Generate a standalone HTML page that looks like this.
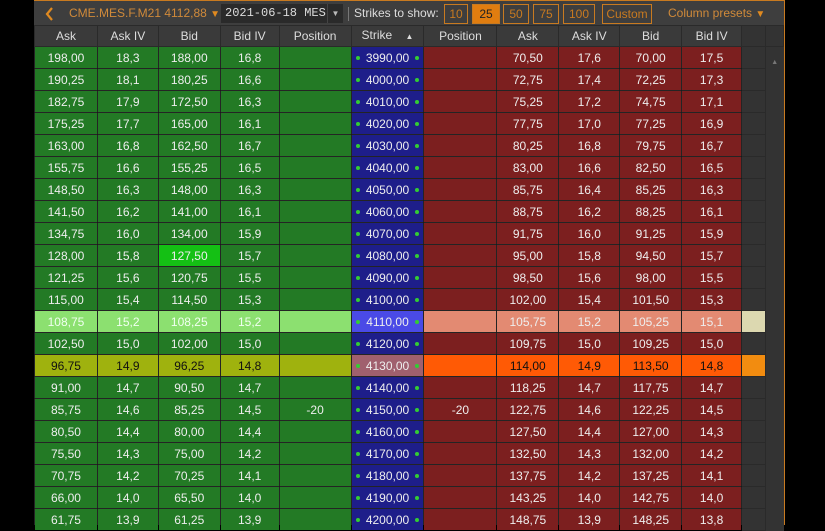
<!DOCTYPE html>
<html><head><style>
*{margin:0;padding:0;box-sizing:border-box}
body{width:825px;height:525px;background:#000;overflow:hidden;font-family:"Liberation Sans",sans-serif;font-size:12px;color:#eee;position:relative}
#win{position:absolute;left:34px;top:0;width:751px;height:525px;background:#333;border-right:1px solid #c87a20;border-top:1px solid #c87a20}
#bar{position:absolute;left:0;top:0;width:750px;height:25px;background:#3e3e3e}
.bar span{position:absolute;top:5px}
.btn{position:absolute;top:3px;height:20px;border:1px solid #c87a20;color:#c87a20;text-align:center;line-height:18px;font-size:12px}
table{position:absolute;left:0;top:24px;border-collapse:collapse;table-layout:fixed}
td,th{height:22px;text-align:center;border:1px solid rgba(0,0,0,.28);white-space:nowrap;overflow:hidden;font-weight:normal;line-height:20px;padding:0}
th{background:#3a3a3a;color:#ddd;height:20px;line-height:18px;border-color:#2a2a2a}
td.g{background:#237a25}
td.r{background:#7c1f1f}
td.s{background:#1e1e8a;position:relative}
td.s:before,td.s:after{content:"";position:absolute;top:9px;width:4px;height:4px;border-radius:2px;background:#3c3}
td.s:before{left:4px}td.s:after{right:4px}
td.e{background:#333;border-color:#2a2a2a}
td.sb{background:#333;border:none;border-left:1px solid #2a2a2a}
tr.hl td.g{background:#8ce070;color:#f0fff0}
tr.hl td.s{background:#4a4ae6}
tr.hl td.r{background:#e38a72}
tr.hl td.e{background:#dcd8b0}
tr.at td.g{background:#9fb20e;color:#111}
tr.at td.s{background:#a0606e}
tr.at td.r{background:#ff5a05;color:#111}
tr.at td.e{background:#f28c10}
</style></head><body>
<div id="win">
<div id="bar" class="bar">
<svg style="position:absolute;left:11px;top:6px" width="10" height="14" viewBox="0 0 10 14"><path d="M7 1 L2 7 L7 13" fill="none" stroke="#e08a20" stroke-width="2.2"/></svg>
<span style="left:35px;color:#d08a3a">CME.MES.F.M21 4112,88 <span style="position:static;color:#e08a20;font-size:10px">&#9660;</span></span>
<div style="position:absolute;left:187px;top:3px;width:106px;height:19px;background:#2a2a2a;font-family:'Liberation Mono',monospace;line-height:19px;padding-left:4px;color:#ddd">2021-06-18 MES</div>
<div style="position:absolute;left:293px;top:3px;width:16px;height:19px;background:#2a2a2a;border-left:1px solid #444;color:#bbb;font-size:8px;text-align:center;line-height:19px">&#9660;</div>
<div style="position:absolute;left:314px;top:6px;width:1px;height:14px;background:#777"></div>
<span style="left:320px;color:#ddd">Strikes to show:</span>
<div class="btn" style="left:410px;width:24px">10</div>
<div class="btn" style="left:438px;width:28px;background:#e07d10;color:#222">25</div>
<div class="btn" style="left:469px;width:26px">50</div>
<div class="btn" style="left:499px;width:26px">75</div>
<div class="btn" style="left:529px;width:32px">100</div>
<div class="btn" style="left:568px;width:50px">Custom</div>
<span style="left:634px;color:#d08a3a">Column presets <span style="position:static;color:#e08a20;font-size:10px">&#9660;</span></span>
</div>
<table>
<colgroup><col style="width:63px"><col style="width:61px"><col style="width:62px"><col style="width:59px"><col style="width:72px"><col style="width:73px"><col style="width:73px"><col style="width:62px"><col style="width:61px"><col style="width:62px"><col style="width:60px"><col style="width:24px"><col style="width:18px"></colgroup>
<tr><th>Ask</th><th>Ask IV</th><th>Bid</th><th>Bid IV</th><th>Position</th><th>Strike <span style="font-size:8px;margin-left:10px">&#9650;</span></th><th>Position</th><th>Ask</th><th>Ask IV</th><th>Bid</th><th>Bid IV</th><th style="background:#333"></th><th style="background:#333"></th></tr>
<tr><td class="g">198,00</td><td class="g">18,3</td><td class="g">188,00</td><td class="g">16,8</td><td class="g"></td><td class="s">3990,00</td><td class="r"></td><td class="r">70,50</td><td class="r">17,6</td><td class="r">70,00</td><td class="r">17,5</td><td class="e"></td><td class="sb" rowspan="22" style="vertical-align:top;color:#777;font-size:7px;padding-top:6px">&#9650;</td></tr>
<tr><td class="g">190,25</td><td class="g">18,1</td><td class="g">180,25</td><td class="g">16,6</td><td class="g"></td><td class="s">4000,00</td><td class="r"></td><td class="r">72,75</td><td class="r">17,4</td><td class="r">72,25</td><td class="r">17,3</td><td class="e"></td></tr>
<tr><td class="g">182,75</td><td class="g">17,9</td><td class="g">172,50</td><td class="g">16,3</td><td class="g"></td><td class="s">4010,00</td><td class="r"></td><td class="r">75,25</td><td class="r">17,2</td><td class="r">74,75</td><td class="r">17,1</td><td class="e"></td></tr>
<tr><td class="g">175,25</td><td class="g">17,7</td><td class="g">165,00</td><td class="g">16,1</td><td class="g"></td><td class="s">4020,00</td><td class="r"></td><td class="r">77,75</td><td class="r">17,0</td><td class="r">77,25</td><td class="r">16,9</td><td class="e"></td></tr>
<tr><td class="g">163,00</td><td class="g">16,8</td><td class="g">162,50</td><td class="g">16,7</td><td class="g"></td><td class="s">4030,00</td><td class="r"></td><td class="r">80,25</td><td class="r">16,8</td><td class="r">79,75</td><td class="r">16,7</td><td class="e"></td></tr>
<tr><td class="g">155,75</td><td class="g">16,6</td><td class="g">155,25</td><td class="g">16,5</td><td class="g"></td><td class="s">4040,00</td><td class="r"></td><td class="r">83,00</td><td class="r">16,6</td><td class="r">82,50</td><td class="r">16,5</td><td class="e"></td></tr>
<tr><td class="g">148,50</td><td class="g">16,3</td><td class="g">148,00</td><td class="g">16,3</td><td class="g"></td><td class="s">4050,00</td><td class="r"></td><td class="r">85,75</td><td class="r">16,4</td><td class="r">85,25</td><td class="r">16,3</td><td class="e"></td></tr>
<tr><td class="g">141,50</td><td class="g">16,2</td><td class="g">141,00</td><td class="g">16,1</td><td class="g"></td><td class="s">4060,00</td><td class="r"></td><td class="r">88,75</td><td class="r">16,2</td><td class="r">88,25</td><td class="r">16,1</td><td class="e"></td></tr>
<tr><td class="g">134,75</td><td class="g">16,0</td><td class="g">134,00</td><td class="g">15,9</td><td class="g"></td><td class="s">4070,00</td><td class="r"></td><td class="r">91,75</td><td class="r">16,0</td><td class="r">91,25</td><td class="r">15,9</td><td class="e"></td></tr>
<tr><td class="g">128,00</td><td class="g">15,8</td><td class="g" style="background:#14c014">127,50</td><td class="g">15,7</td><td class="g"></td><td class="s">4080,00</td><td class="r"></td><td class="r">95,00</td><td class="r">15,8</td><td class="r">94,50</td><td class="r">15,7</td><td class="e"></td></tr>
<tr><td class="g">121,25</td><td class="g">15,6</td><td class="g">120,75</td><td class="g">15,5</td><td class="g"></td><td class="s">4090,00</td><td class="r"></td><td class="r">98,50</td><td class="r">15,6</td><td class="r">98,00</td><td class="r">15,5</td><td class="e"></td></tr>
<tr><td class="g">115,00</td><td class="g">15,4</td><td class="g">114,50</td><td class="g">15,3</td><td class="g"></td><td class="s">4100,00</td><td class="r"></td><td class="r">102,00</td><td class="r">15,4</td><td class="r">101,50</td><td class="r">15,3</td><td class="e"></td></tr>
<tr class="hl"><td class="g">108,75</td><td class="g">15,2</td><td class="g">108,25</td><td class="g">15,2</td><td class="g"></td><td class="s">4110,00</td><td class="r"></td><td class="r">105,75</td><td class="r">15,2</td><td class="r">105,25</td><td class="r">15,1</td><td class="e"></td></tr>
<tr><td class="g">102,50</td><td class="g">15,0</td><td class="g">102,00</td><td class="g">15,0</td><td class="g"></td><td class="s">4120,00</td><td class="r"></td><td class="r">109,75</td><td class="r">15,0</td><td class="r">109,25</td><td class="r">15,0</td><td class="e"></td></tr>
<tr class="at"><td class="g">96,75</td><td class="g">14,9</td><td class="g">96,25</td><td class="g">14,8</td><td class="g"></td><td class="s">4130,00</td><td class="r"></td><td class="r">114,00</td><td class="r">14,9</td><td class="r">113,50</td><td class="r">14,8</td><td class="e"></td></tr>
<tr><td class="g">91,00</td><td class="g">14,7</td><td class="g">90,50</td><td class="g">14,7</td><td class="g"></td><td class="s">4140,00</td><td class="r"></td><td class="r">118,25</td><td class="r">14,7</td><td class="r">117,75</td><td class="r">14,7</td><td class="e"></td></tr>
<tr><td class="g">85,75</td><td class="g">14,6</td><td class="g">85,25</td><td class="g">14,5</td><td class="g">-20</td><td class="s">4150,00</td><td class="r">-20</td><td class="r">122,75</td><td class="r">14,6</td><td class="r">122,25</td><td class="r">14,5</td><td class="e"></td></tr>
<tr><td class="g">80,50</td><td class="g">14,4</td><td class="g">80,00</td><td class="g">14,4</td><td class="g"></td><td class="s">4160,00</td><td class="r"></td><td class="r">127,50</td><td class="r">14,4</td><td class="r">127,00</td><td class="r">14,3</td><td class="e"></td></tr>
<tr><td class="g">75,50</td><td class="g">14,3</td><td class="g">75,00</td><td class="g">14,2</td><td class="g"></td><td class="s">4170,00</td><td class="r"></td><td class="r">132,50</td><td class="r">14,3</td><td class="r">132,00</td><td class="r">14,2</td><td class="e"></td></tr>
<tr><td class="g">70,75</td><td class="g">14,2</td><td class="g">70,25</td><td class="g">14,1</td><td class="g"></td><td class="s">4180,00</td><td class="r"></td><td class="r">137,75</td><td class="r">14,2</td><td class="r">137,25</td><td class="r">14,1</td><td class="e"></td></tr>
<tr><td class="g">66,00</td><td class="g">14,0</td><td class="g">65,50</td><td class="g">14,0</td><td class="g"></td><td class="s">4190,00</td><td class="r"></td><td class="r">143,25</td><td class="r">14,0</td><td class="r">142,75</td><td class="r">14,0</td><td class="e"></td></tr>
<tr><td class="g">61,75</td><td class="g">13,9</td><td class="g">61,25</td><td class="g">13,9</td><td class="g"></td><td class="s">4200,00</td><td class="r"></td><td class="r">148,75</td><td class="r">13,9</td><td class="r">148,25</td><td class="r">13,8</td><td class="e"></td></tr>
</table>
</div>
</body></html>
